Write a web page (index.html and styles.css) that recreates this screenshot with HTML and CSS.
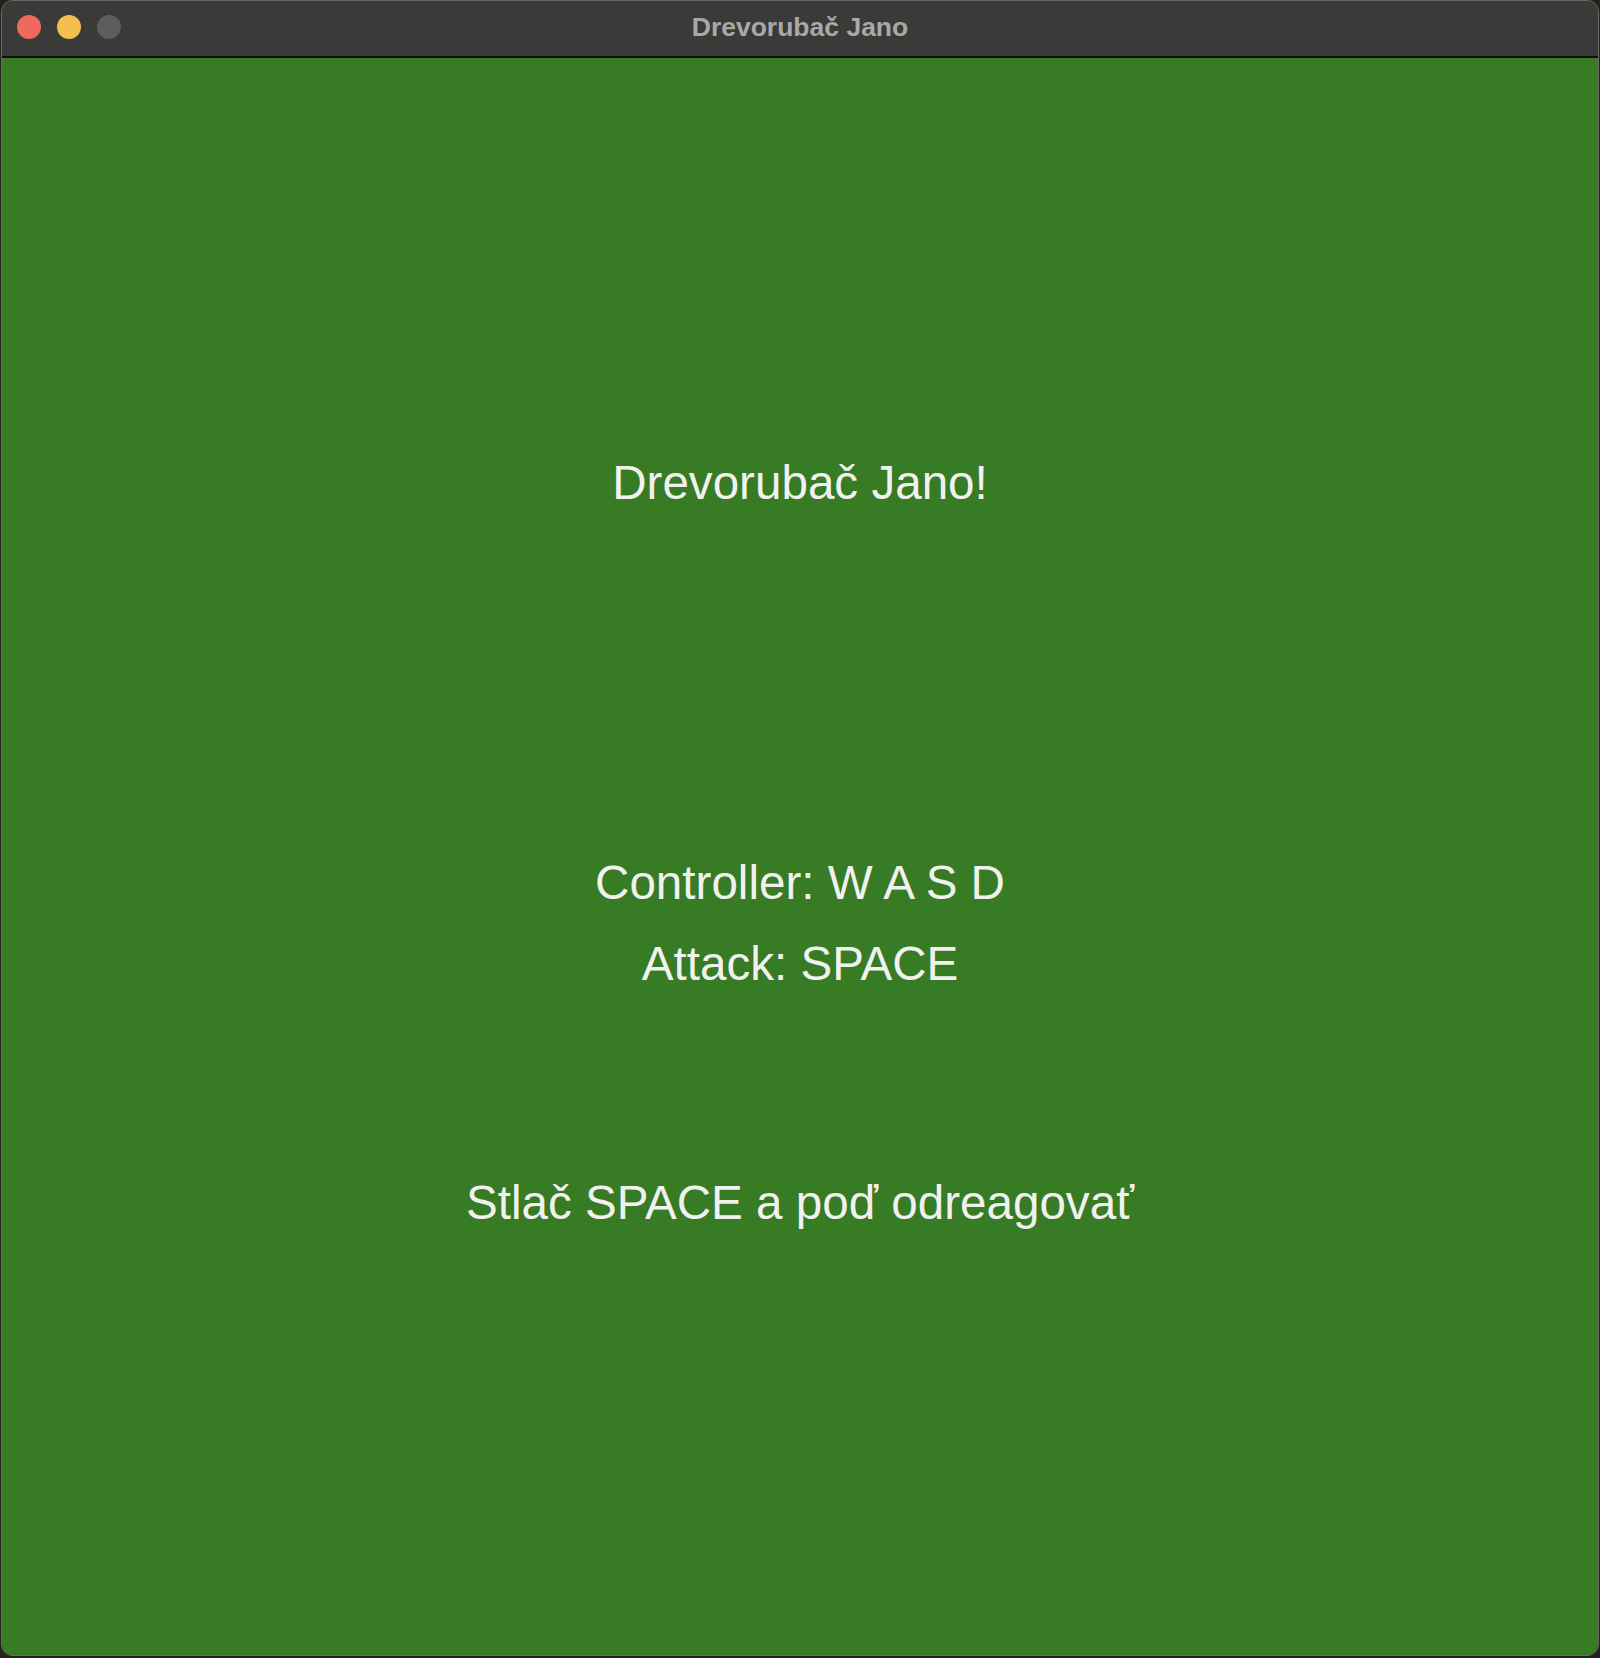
FILE: index.html
```html
<!DOCTYPE html>
<html lang="sk">
<head>
<meta charset="utf-8">
<title>Drevorubač Jano</title>
<link rel="stylesheet" href="styles.css">
</head>
<body>
<div class="window">
  <div class="titlebar">
    <div class="lights">
      <span class="light red"></span>
      <span class="light yellow"></span>
      <span class="light gray"></span>
    </div>
    <div class="title">Drevorubač Jano</div>
  </div>
  <div class="content">
    <div class="line l1">Drevorubač Jano!</div>
    <div class="line l2">Controller: W A S D</div>
    <div class="line l3">Attack: SPACE</div>
    <div class="line l4">Stlač SPACE a poď odreagovať</div>
  </div>
</div>
</body>
</html>
```
FILE: styles.css
```css
html, body {
  margin: 0;
  padding: 0;
}
body {
  width: 1600px;
  height: 1658px;
  background: #23231f;
  overflow: hidden;
}
.window {
  margin-left: 1px;
  width: 1598px;
  height: 1656px;
  box-sizing: border-box;
  border: 1px solid #6a6a66;
  border-radius: 12px;
  overflow: hidden;
  display: flex;
  flex-direction: column;
  background: #377b24;
}
.titlebar {
  height: 55px;
  flex: none;
  background: #3a3a39;
  border-bottom: 2px solid #111;
  position: relative;
  display: flex;
  align-items: center;
  justify-content: center;
}
.lights {
  position: absolute;
  left: 15px;
  top: 14px;
  display: flex;
  gap: 16px;
}
.light {
  width: 24px;
  height: 24px;
  border-radius: 50%;
  display: block;
}
.red { background: #ee6a5f; }
.yellow { background: #f5bf4f; }
.gray { background: #5d5d5c; }
.title {
  font-family: "Liberation Sans", Arial, sans-serif;
  font-weight: bold;
  font-size: 26.5px;
  color: #a8a8a6;
  line-height: 1;
  margin-top: -3px;
}
.content {
  flex: 1;
  background: #377b24;
  display: flex;
  flex-direction: column;
  align-items: center;
  padding-top: 401px;
  font-family: "Liberation Sans", Arial, sans-serif;
  font-size: 47.6px;
  color: #f1f1ef;
}
.line {
  line-height: 47px;
  height: 47px;
  white-space: nowrap;
}
.l2 { margin-top: 353px; }
.l3 { margin-top: 34px; }
.l4 { margin-top: 192px; }
```
